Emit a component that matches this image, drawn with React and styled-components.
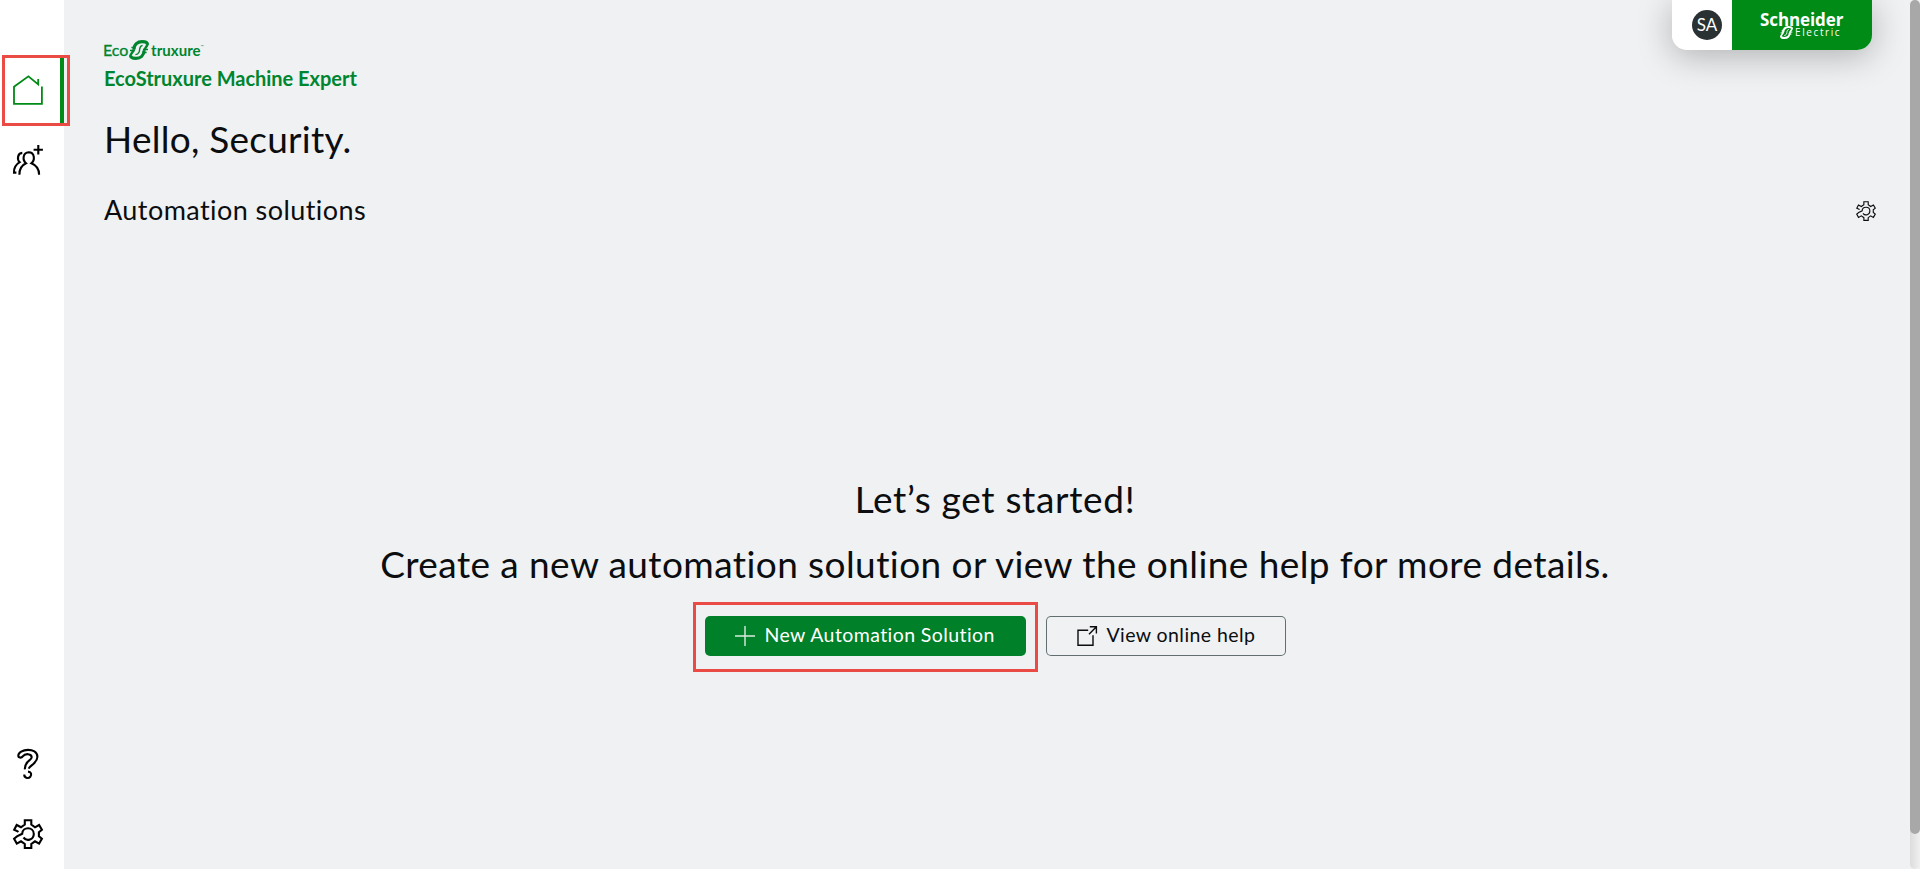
import React from "react";
import styled, { createGlobalStyle, css } from "styled-components";

const Global = createGlobalStyle`
  *, *::before, *::after { box-sizing: border-box; }
  body {
    margin: 0;
    overflow: hidden;
    background: #eff1f3;
    color: #0b0d0e;
    font-family: Lato, "Noto Sans", sans-serif;
  }
  svg { display: block; flex: none; overflow: visible; }
`;

const Page = styled.div`
  display: flex;
  width: 100%;
  height: 100vh;
  min-height: 869px;
`;

const Sidebar = styled.nav`
  display: flex;
  flex-direction: column;
  flex: none;
  width: 64px;
  padding: 58px 0 0;
  background: #fff;
`;

const NavItem = styled.a`
  position: relative;
  display: flex;
  align-items: center;
  height: ${(p) => p.$height || 70}px;
  padding-left: 13px;
  color: ${(p) => (p.$active ? "#008a16" : "#000")};
  ${(p) =>
    p.$active &&
    css`
      padding-bottom: 2px;
      border-right: 4px solid #008a16;
    `}
`;

const Spacer = styled.div`
  flex: 1;
`;

const Highlight = styled.span`
  position: absolute;
  inset: ${(p) => p.$inset};
  border: 3px solid #ea4b45;
  pointer-events: none;
`;

const Main = styled.main`
  display: flex;
  flex-direction: column;
  flex: 1;
  min-width: 0;
  padding: 0 34px 0 40px;
`;

const Header = styled.header`
  display: flex;
  justify-content: space-between;
  align-items: flex-start;
  height: 101px;
  padding-right: 4px;
`;

const Product = styled.div`
  display: flex;
  flex-direction: column;
  padding-top: 39px;
`;

const ProductLogo = styled.div`
  display: flex;
  align-items: center;
  height: 22px;
  color: #00852f;
  font-size: 16px;
  line-height: 22px;
`;

const LogoThin = styled.span`
  width: 25px;
  margin-left: -1px;
  margin-right: 1px;
  -webkit-text-stroke: 0.3px currentColor;
`;

const LogoBold = styled.span`
  margin-left: 2px;
  font-size: 15px;
  font-weight: 700;
  letter-spacing: 0.05px;
`;

const Trademark = styled.span`
  font-size: 4px;
  line-height: 12px;
  align-self: flex-start;
  margin-top: 2px;
`;

const ProductName = styled.h1`
  margin: 4px 0 0;
  color: #00852f;
  font-size: 20px;
  font-weight: 700;
  line-height: 26px;
  letter-spacing: -0.02px;
`;

const AccountCard = styled.div`
  display: flex;
  height: 50px;
  border-radius: 0 0 15px 15px;
  box-shadow: 0 6px 34px rgba(0, 0, 0, 0.27);
`;

const UserArea = styled.div`
  display: flex;
  align-items: center;
  width: 60px;
  padding-left: 20px;
  background: #fff;
  border-radius: 0 0 0 15px;
`;

const Avatar = styled.div`
  width: 30px;
  height: 30px;
  border-radius: 50%;
  background: #293133;
  color: #fff;
  font-size: 17px;
  line-height: 29px;
  text-align: center;
`;

const BrandArea = styled.div`
  display: flex;
  flex-direction: column;
  width: 140px;
  padding: 12px 0 0 28px;
  border-radius: 0 0 15px 0;
  background: #008a16;
  color: #fff;
`;

const BrandName = styled.span`
  font-family: "Open Sans", sans-serif;
  font-size: 17px;
  font-weight: 700;
  line-height: 15px;
  letter-spacing: -0.1px;
`;

const BrandSub = styled.span`
  display: flex;
  align-items: center;
  height: 10px;
  padding-left: 20px;
  font-family: "Open Sans", sans-serif;
  font-size: 10px;
  line-height: 10px;
  letter-spacing: 1.6px;
  gap: 2px;
`;

const Greeting = styled.h2`
  margin: 0;
  height: 76px;
  font-size: 37px;
  font-weight: 400;
  line-height: 75px;
  letter-spacing: 0.25px;
`;

const SectionBar = styled.div`
  display: flex;
  align-items: center;
  justify-content: space-between;
  height: 68px;
`;

const SectionTitle = styled.h3`
  margin: 0;
  padding-bottom: 2px;
  font-size: 27px;
  font-weight: 400;
  line-height: 64px;
  letter-spacing: 0.43px;
`;

const EmptyState = styled.section`
  display: flex;
  flex-direction: column;
  align-items: center;
  width: 1782px;
  padding-top: 221px;
`;

const EmptyLine = styled.p`
  margin: 0;
  font-size: 37px;
  line-height: 65px;
  letter-spacing: ${(p) => p.$tracking}px;
  white-space: nowrap;
`;

const Actions = styled.div`
  display: flex;
  gap: 20px;
  margin-top: 20px;
`;

const Button = styled.button`
  position: relative;
  display: flex;
  align-items: flex-start;
  width: ${(p) => p.$width}px;
  height: 40px;
  padding: 10px 0 0 ${(p) => (p.$primary ? 30 : 31)}px;
  gap: 10px;
  border: 0;
  border-radius: 5px;
  font: 400 19.5px/18px Lato, "Noto Sans", sans-serif;
  letter-spacing: 0.42px;
  white-space: nowrap;
  ${(p) =>
    p.$primary
      ? css`
          background: #008029;
          color: #fff;
        `
      : css`
          background: transparent;
          color: #0b0d0e;
          box-shadow: inset 0 0 0 1px #626e70;
        `}
`;

const ScrollTrack = styled.div`
  flex: none;
  width: 10px;
  border-radius: 5px;
  background: linear-gradient(90deg, #dcdcdc, #f0f0f0);
`;

const ScrollThumb = styled.div`
  height: 834px;
  border-radius: 5px;
  background: #a8a8a8;
`;

const line = { fill: "none", stroke: "currentColor" };

const HomeIcon = () => (
  <svg width="30" height="30" viewBox="0 0 30 30" {...line} strokeWidth="1.8">
    <path d="M28.9 11.6V28.9H1V11.7L15.4 1.3L25.2 9.4V4" />
  </svg>
);

const AddUserIcon = () => (
  <svg width="30" height="30" viewBox="0 0 30 30" {...line} strokeWidth="2.1">
    <path d="M25.3 0V9.4M20.6 4.7H29.9" />
    <path d="M6.4 29.8C6.3 25.3 7.8 20.6 13 18.2C9.2 15 9.8 7.5 15.7 7.3C21.8 7.4 22.2 15 18.4 18.2C23.6 20.3 26.2 25 26.1 29.8" />
    <path d="M9.3 7.9C4.3 8.2 3.9 14.6 6.7 17.2C2.6 19.7 .8 23.7 1 27.6H3.4" />
  </svg>
);

const HelpIcon = () => (
  <svg width="30" height="30" viewBox="0 0 30 30" {...line} strokeWidth="2.1">
    <path d="M15.6 19.6C17.3 16.2 24.4 14.2 24.4 7.8C24.4 2.8 19.6 .9 15 .9C9.8 .9 5.3 3.4 5.3 6.5C5.3 9 8.5 9.2 9.7 7.4C12.2 4.1 18.7 4.5 18.7 8.3C18.7 11.6 11.3 12 11.9 20.3" />
    <path d="M15 22.6C18.2 22.8 19 25.7 17.3 27.8C15 30.3 11 28.6 11.3 25.5" />
  </svg>
);

const GearIcon = ({ size, weight }) => (
  <svg width={size} height={size} viewBox="0 0 30 30" {...line} strokeWidth={weight}>
    <path d="M5.4 13L4.6 12.3L1.2 10.8L3.7 6L8 8.3L11.8 5.5V1.2H18.3V5.5L22 8.3L26.1 6L28.9 10.8L25.9 13.2V17.2L28.9 19.7L26.1 24.6L22 22.3L18.3 25V29H11.8V25L8 22.3L3.8 24.6L1.1 19.7L4 17.4L9.2 14.8C9.5 7.4 20.7 7.5 20.8 14.9C20.7 20.4 14 23.1 10.5 18.5" />
  </svg>
);

const PlusIcon = () => (
  <svg width="20" height="20" viewBox="0 0 20 20" {...line} strokeWidth="1.4" opacity=".85">
    <path d="M10 0V20M0 10H20" />
  </svg>
);

const ExternalIcon = () => (
  <svg width="20" height="20" viewBox="0 0 20 20" {...line} strokeWidth="1.4">
    <path d="M11.2 4.3H1V19.3H16V9.2M12 8.2L19.2 .9M12.8 .7H19.4V7.4" />
  </svg>
);

const Swirl = ({ width }) => (
  <svg width={width} height={width} viewBox="0 0 20 20" {...line}>
    <path strokeWidth="3.2" d="M5 9.5C5 4.4 8.6 1.6 13 1.6C16.4 1.6 18.4 2.6 18.4 4.4" />
    <path strokeWidth="3.2" d="M15 10.5C15 15.6 11.4 18.4 7 18.4C3.6 18.4 1.6 17.4 1.6 15.6" />
    <path strokeWidth="2.4" d="M18.8 3.4C18.4 7 15.2 8 15.2 10.8M1.2 16.6C1.6 13 4.8 12 4.8 9.2" />
    <path strokeWidth="1.5" d="M2.4 7.6H6.4M1 10.6H5.8M14 9.4H19M14 12.4H17.6" />
    <path strokeWidth="1.4" d="M13.6 5.4C9.6 6 11.4 9.4 10 12.2C9.2 13.8 8.2 14.4 6.4 14.6" />
  </svg>
);

export default function App() {
  return (
    <>
      <Global />
      <Page>
        <Sidebar>
          <NavItem $active $height={65}>
            <HomeIcon />
            <Highlight $inset="-3px -10px -3px 2px" />
          </NavItem>
          <NavItem $height={74}>
            <AddUserIcon />
          </NavItem>
          <Spacer />
          <NavItem>
            <HelpIcon />
          </NavItem>
          <NavItem>
            <GearIcon size={30} weight={2.1} />
          </NavItem>
        </Sidebar>
        <Main>
          <Header>
            <Product>
              <ProductLogo>
                <LogoThin>Eco</LogoThin>
                <Swirl width={20} />
                <LogoBold>truxure</LogoBold>
                <Trademark>™</Trademark>
              </ProductLogo>
              <ProductName>EcoStruxure Machine Expert</ProductName>
            </Product>
            <AccountCard>
              <UserArea>
                <Avatar>SA</Avatar>
              </UserArea>
              <BrandArea>
                <BrandName>Schneider</BrandName>
                <BrandSub>
                  <Swirl width={13} />
                  Electric
                </BrandSub>
              </BrandArea>
            </AccountCard>
          </Header>
          <Greeting>Hello, Security.</Greeting>
          <SectionBar>
            <SectionTitle>Automation solutions</SectionTitle>
            <GearIcon size={20} weight={1.7} />
          </SectionBar>
          <EmptyState>
            <EmptyLine $tracking={0.68}>Let’s get started!</EmptyLine>
            <EmptyLine $tracking={0.42}>
              Create a new automation solution or view the online help for more details.
            </EmptyLine>
            <Actions>
              <Button $primary $width={321}>
                <PlusIcon />
                New Automation Solution
                <Highlight $inset="-14px -12px -16px -12px" />
              </Button>
              <Button $width={240}>
                <ExternalIcon />
                View online help
              </Button>
            </Actions>
          </EmptyState>
        </Main>
        <ScrollTrack>
          <ScrollThumb />
        </ScrollTrack>
      </Page>
    </>
  );
}
